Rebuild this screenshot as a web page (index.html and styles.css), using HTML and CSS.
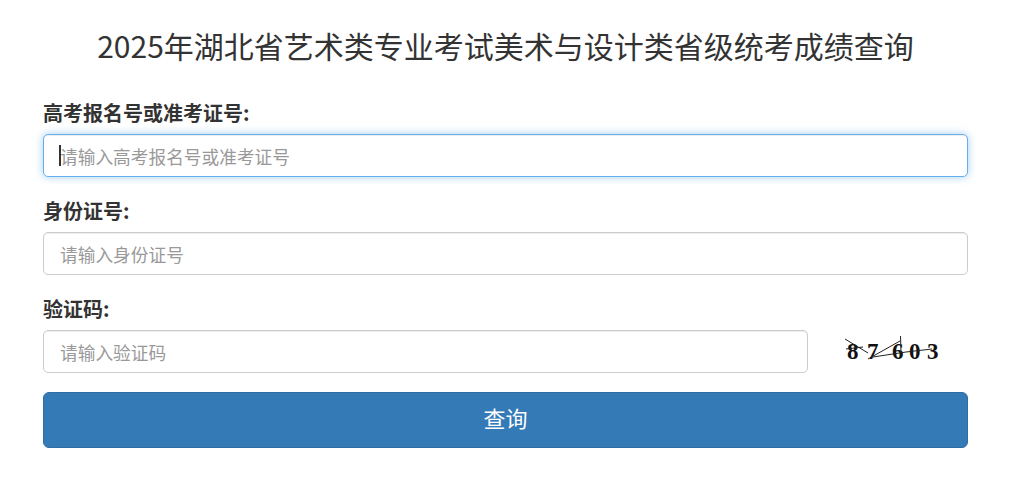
FILE: index.html
```html
<!DOCTYPE html>
<html lang="zh-CN">
<head>
<meta charset="utf-8">
<title>2025年湖北省艺术类专业考试美术与设计类省级统考成绩查询</title>
<link rel="stylesheet" href="styles.css">
</head>
<body>
<div class="container">
  <h1 class="title">2025年湖北省艺术类专业考试美术与设计类省级统考成绩查询</h1>
  <form class="form">
    <div class="group">
      <label class="label" for="ksh">高考报名号或准考证号:</label>
      <div class="field focused">
        <span class="caret"></span>
        <input class="input" id="ksh" type="text" placeholder="请输入高考报名号或准考证号">
      </div>
    </div>
    <div class="group">
      <label class="label" for="sfz">身份证号:</label>
      <div class="field">
        <input class="input" id="sfz" type="text" placeholder="请输入身份证号">
      </div>
    </div>
    <div class="group">
      <label class="label" for="yzm">验证码:</label>
      <div class="captcha-row">
        <div class="field grow">
          <input class="input" id="yzm" type="text" placeholder="请输入验证码">
        </div>
        <div class="captcha">
          <svg width="110" height="43" viewBox="0 0 110 43">
            <g font-family="'Liberation Serif', serif" font-weight="bold" font-size="23" fill="#111">
              <text x="7" y="29">8</text>
              <text x="27" y="29">7</text>
              <text x="52" y="29">6</text>
              <text x="69" y="29">0</text>
              <text x="87" y="29">3</text>
            </g>
            <g stroke="#222" stroke-width="1" fill="none">
              <line x1="5" y1="9" x2="28" y2="23"/>
              <line x1="28" y1="29" x2="60" y2="11"/>
              <line x1="33" y1="27" x2="66" y2="22"/>
              <line x1="66" y1="22" x2="92" y2="19"/>
              <line x1="60.5" y1="6" x2="61" y2="23"/>
              <line x1="6" y1="19" x2="23" y2="17"/>
            </g>
          </svg>
        </div>
      </div>
    </div>
    <button class="btn" type="button">查询</button>
  </form>
</div>
</body>
</html>
```
FILE: styles.css
```css
html, body {
  margin: 0;
  padding: 0;
  background: #fff;
}

body {
  font-family: "Noto Sans CJK SC", "Noto Sans", "Liberation Sans", sans-serif;
  color: #333;
}

.container {
  width: 925px;
  margin-left: 43px;
  padding-top: 25px;
}

.title {
  margin: 0 0 34px;
  font-size: 30px;
  line-height: 40px;
  font-weight: normal;
  text-align: center;
  color: #333;
}

.form {
  display: flex;
  flex-direction: column;
}

.group {
  display: flex;
  flex-direction: column;
  margin-bottom: 20px;
}

.group:last-of-type {
  margin-bottom: 19px;
}

.label {
  display: block;
  font-size: 20px;
  line-height: 27px;
  font-weight: bold;
  margin-bottom: 8px;
  color: #333;
}

.field {
  position: relative;
  height: 43px;
}

.input {
  box-sizing: border-box;
  width: 100%;
  height: 43px;
  margin: 0;
  padding: 0 16px;
  border: 1px solid #ccc;
  border-radius: 5px;
  font-family: inherit;
  font-size: 17.7px;
  color: #555;
  background: #fff;
  outline: none;
  box-shadow: inset 0 1px 1px rgba(0, 0, 0, 0.075);
}

.input::placeholder {
  color: #999;
}

.focused .input {
  border-color: #66afe9;
  box-shadow: inset 0 1px 1px rgba(0, 0, 0, 0.075), 0 0 8px rgba(102, 175, 233, 0.6);
}

.caret {
  position: absolute;
  left: 16px;
  top: 11px;
  width: 2px;
  height: 21px;
  background: #333;
  z-index: 1;
}

.captcha-row {
  display: flex;
  align-items: center;
}

.grow {
  flex: 1;
}

.captcha {
  width: 160px;
  height: 43px;
  display: flex;
  justify-content: flex-end;
  padding-right: 18px;
  box-sizing: border-box;
}

.captcha svg {
  display: block;
}

.btn {
  height: 56px;
  width: 100%;
  border: 1px solid #2e6da4;
  border-radius: 6px;
  background: #337ab7;
  color: #fff;
  font-family: inherit;
  font-size: 22px;
  padding: 0 0 6px;
  cursor: pointer;
}
```
